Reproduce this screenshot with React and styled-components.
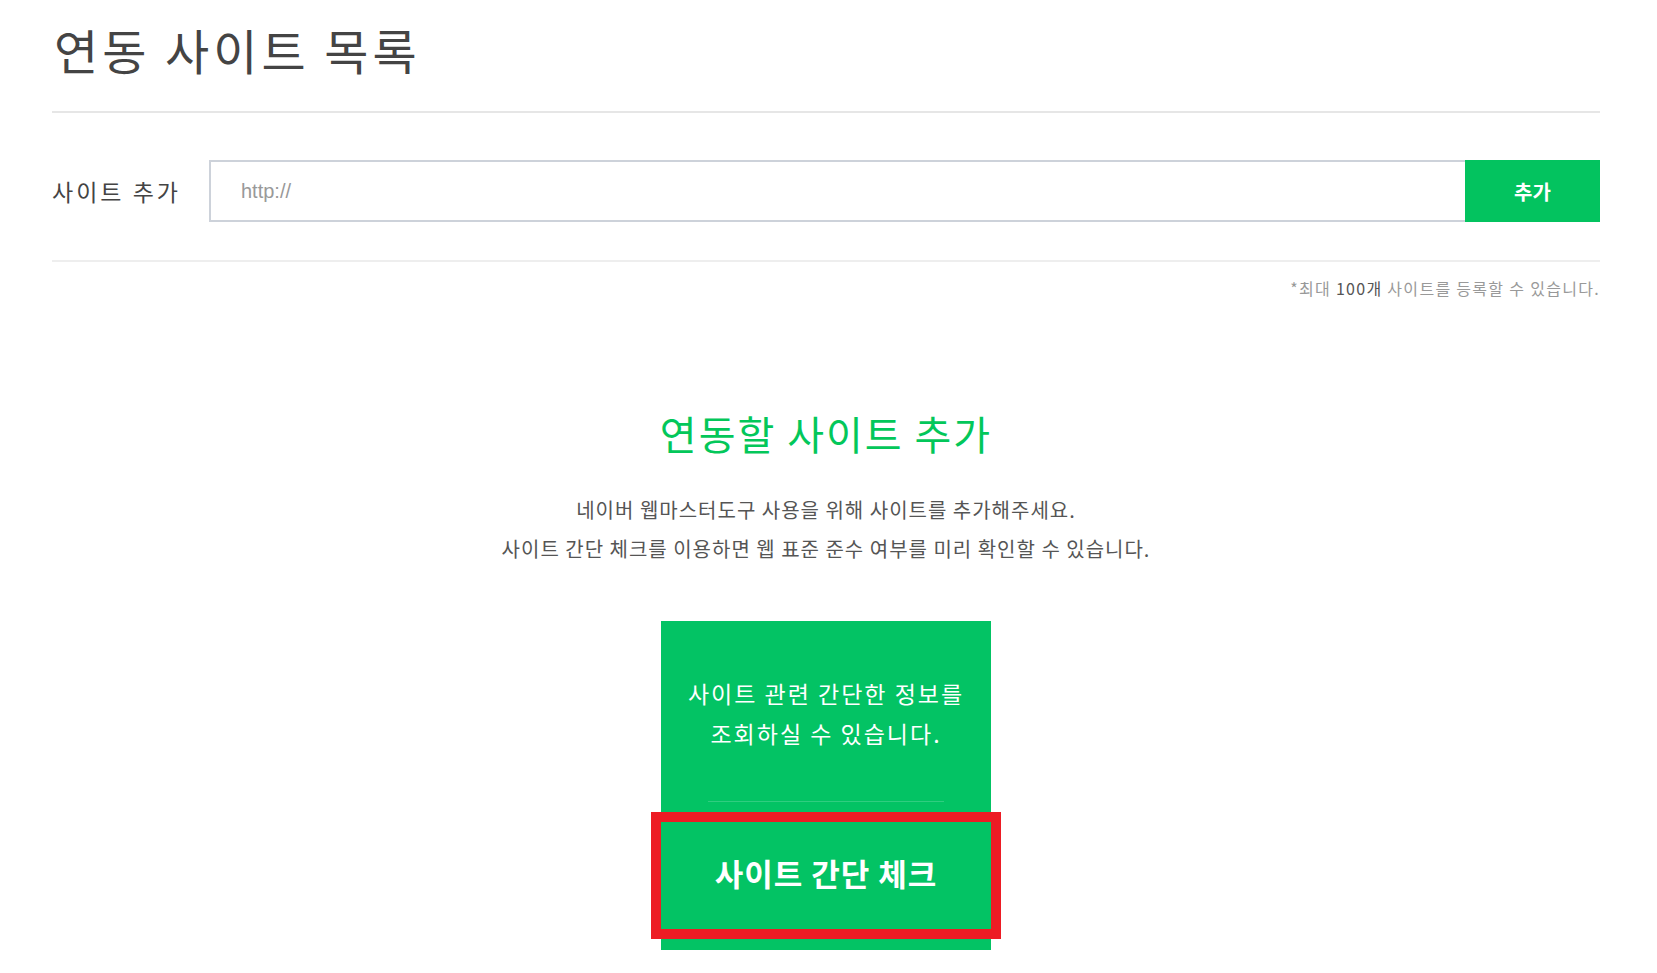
import React from 'react';
import styled, { createGlobalStyle } from 'styled-components';

const GlobalStyle = createGlobalStyle`
  body {
    margin: 0;
    background: #fff;
    font-family: "Noto Sans CJK KR", "Noto Sans", sans-serif;
    color: #444;
  }
`;

const Page = styled.div`
  padding: 0 57px 0 52px;
`;

const Header = styled.div`
  border-bottom: 2px solid #e6e6e6;
  padding: 11px 0 24px 2px;
`;

const Title = styled.h1`
  margin: 0;
  font-size: 48px;
  font-weight: 400;
  line-height: 76px;
  color: #444;
  letter-spacing: 4px;
`;

const FormRow = styled.div`
  display: flex;
  align-items: center;
  margin-top: 47px;
  padding-bottom: 38px;
  border-bottom: 2px solid #eeeeee;
`;

const Label = styled.label`
  width: 157px;
  font-size: 23px;
  color: #444;
  letter-spacing: 3px;
`;

const UrlInput = styled.input`
  flex: 1;
  height: 62px;
  box-sizing: border-box;
  border: 2px solid #cdd2da;
  border-right: none;
  padding: 0 30px;
  font-family: "Liberation Sans", Arial, sans-serif;
  font-size: 20px;
  color: #444;
  outline: none;
  &::placeholder {
    color: #999;
  }
`;

const AddButton = styled.button`
  width: 135px;
  height: 62px;
  border: none;
  background: #03c35f;
  color: #fff;
  font-family: inherit;
  font-size: 20px;
  font-weight: 700;
  cursor: pointer;
`;

const Note = styled.p`
  margin: 15px 0 0;
  text-align: right;
  font-size: 16px;
  line-height: 22px;
  letter-spacing: 1.3px;
  color: #999;
  span {
    color: #555;
  }
`;

const Intro = styled.section`
  display: flex;
  flex-direction: column;
  align-items: center;
  margin-top: 106px;
`;

const Heading = styled.h2`
  margin: 0;
  font-size: 40px;
  font-weight: 400;
  line-height: 56px;
  color: #03c75a;
  letter-spacing: 2px;
`;

const Desc = styled.p`
  margin: 29px 0 0;
  text-align: center;
  font-size: 20px;
  line-height: 39px;
  letter-spacing: 1px;
  color: #555;
`;

const Card = styled.div`
  width: 330px;
  margin-top: 53px;
  background: #03c364;
  padding: 52px 0 21px;
  display: flex;
  flex-direction: column;
  align-items: center;
`;

const CardText = styled.p`
  margin: 0;
  text-align: center;
  font-size: 23px;
  line-height: 40px;
  color: #fff;
  letter-spacing: 2px;
`;

const CardDivider = styled.div`
  width: 236px;
  height: 1px;
  margin-top: 48px;
  background: rgba(255, 255, 255, 0.18);
`;

const CheckButton = styled.button`
  width: 100%;
  height: 107px;
  margin-top: 20px;
  padding: 0 0 6px;
  border: none;
  background: transparent;
  outline: 10px solid #ed1c24;
  color: #fff;
  font-family: inherit;
  font-size: 31px;
  font-weight: 700;
  letter-spacing: 1px;
  cursor: pointer;
`;

export default function App() {
  return (
    <Page>
      <GlobalStyle />
      <Header>
        <Title>연동 사이트 목록</Title>
      </Header>
      <FormRow>
        <Label>사이트 추가</Label>
        <UrlInput placeholder="http://" />
        <AddButton>추가</AddButton>
      </FormRow>
      <Note>
        *최대 <span>100개</span> 사이트를 등록할 수 있습니다.
      </Note>
      <Intro>
        <Heading>연동할 사이트 추가</Heading>
        <Desc>
          네이버 웹마스터도구 사용을 위해 사이트를 추가해주세요.
          <br />
          사이트 간단 체크를 이용하면 웹 표준 준수 여부를 미리 확인할 수 있습니다.
        </Desc>
        <Card>
          <CardText>
            사이트 관련 간단한 정보를
            <br />
            조회하실 수 있습니다.
          </CardText>
          <CardDivider />
          <CheckButton>사이트 간단 체크</CheckButton>
        </Card>
      </Intro>
    </Page>
  );
}
